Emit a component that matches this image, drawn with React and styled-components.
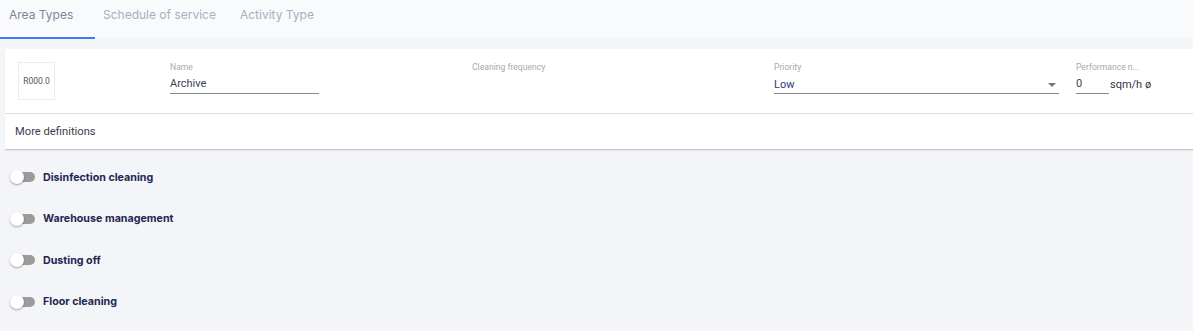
import styled, { createGlobalStyle } from 'styled-components'

const GlobalStyle = createGlobalStyle`
  html, body {
    margin: 0;
    padding: 0;
    background: #f4f5f8;
    font-family: Inter, "Noto Sans", sans-serif;
  }
`

const tabs = ['Area Types', 'Schedule of service', 'Activity Type']
const services = ['Disinfection cleaning', 'Warehouse management', 'Dusting off', 'Floor cleaning']

const App = () => {
  return (
    <Page>
      <GlobalStyle />
      <TabBar>
        {tabs.map((t, i) => (
          <Tab key={t} active={i === 0}>{t}</Tab>
        ))}
      </TabBar>
      <Card>
        <FieldsRow>
          <CodeBox>R000.0</CodeBox>
          <Field>
            <Label>Name</Label>
            <Input width="149px">Archive</Input>
          </Field>
          <Field>
            <Label>Cleaning frequency</Label>
          </Field>
          <Field>
            <Label>Priority</Label>
            <Select>
              <span>Low</span>
              <Caret />
            </Select>
          </Field>
          <Field>
            <Label>Performance n...</Label>
            <PerfRow>
              <Input width="33px">0</Input>
              <Unit>sqm/h ø</Unit>
            </PerfRow>
          </Field>
        </FieldsRow>
        <MoreRow>More definitions</MoreRow>
      </Card>
      <ToggleList>
        {services.map(s => (
          <ToggleRow key={s}>
            <Switch>
              <Thumb />
            </Switch>
            <ToggleLabel>{s}</ToggleLabel>
          </ToggleRow>
        ))}
      </ToggleList>
    </Page>
  )
}

const Page = styled.div`
  width: 1193px;
  height: 331px;
  overflow: hidden;
`
const TabBar = styled.div`
  display: flex;
  height: 39px;
  background: #f9fafc;
`
const Tab = styled.div`
  box-sizing: border-box;
  min-width: 95px;
  height: 39px;
  padding: 0 16px 0 8px;
  line-height: 29px;
  font-size: 12px;
  color: ${({active}) => (active ? '#7d8699' : '#a7afbf')};
  border-bottom: 2px solid ${({active}) => (active ? '#3b7cf6' : 'transparent')};
  &:first-child { padding-left: 9px; }
`
const Card = styled.div`
  margin: 10px 0 0 5px;
  background: #fff;
  border-bottom: 1px solid #c9c9c9;
  box-shadow: 0 1px 1px rgba(0,0,0,0.06);
`
const FieldsRow = styled.div`
  display: grid;
  grid-template-columns: 152px 302px 302px 302px 1fr;
  padding: 13px 0 0 13px;
  height: 51px;
  border-bottom: 1px solid #dedede;
  font-family: Roboto, "Liberation Sans", sans-serif;
`
const CodeBox = styled.div`
  width: 35px;
  height: 36px;
  border: 1px solid #ececf0;
  display: flex;
  align-items: center;
  justify-content: center;
  font-size: 8.5px;
  color: #555;
`
const Field = styled.div`
  display: flex;
  flex-direction: column;
`
const Label = styled.div`
  font-size: 8.6px;
  color: #a9a9a9;
  height: 13px;
  line-height: 10px;
`
const Input = styled.div`
  width: ${({width}) => width};
  height: 18px;
  border-bottom: 1px solid #8a8a8a;
  font-size: 11px;
  line-height: 18px;
  color: #3a3f5c;
`
const Select = styled.div`
  width: 285px;
  height: 18px;
  display: flex;
  justify-content: space-between;
  align-items: center;
  border-bottom: 1px solid #8a8a8a;
  font-size: 11px;
  color: #2f3a7a;
`
const Caret = styled.span`
  width: 0;
  height: 0;
  border-left: 4px solid transparent;
  border-right: 4px solid transparent;
  border-top: 4px solid #777;
  margin-right: 3px;
  margin-top: 2px;
`
const PerfRow = styled.div`
  display: flex;
  align-items: flex-start;
`
const Unit = styled.span`
  font-size: 11px;
  color: #333645;
  margin-left: 1px;
  line-height: 18px;
  margin-top: 1px;
`
const MoreRow = styled.div`
  height: 35px;
  padding-left: 10px;
  display: flex;
  align-items: center;
  font-family: Roboto, "Liberation Sans", sans-serif;
  font-size: 11.2px;
  color: #3c3c4a;
`
const ToggleList = styled.div`
  display: flex;
  flex-direction: column;
  padding: 19px 0 0 11px;
  gap: 25.6px;
`
const ToggleRow = styled.div`
  display: flex;
  align-items: center;
  height: 16px;
`
const Switch = styled.div`
  position: relative;
  width: 24px;
  height: 10px;
  border-radius: 5px;
  background: #9b9b9b;
  margin-right: 8px;
`
const Thumb = styled.span`
  position: absolute;
  left: -1px;
  top: -2px;
  width: 14px;
  height: 14px;
  border-radius: 50%;
  background: #fff;
  box-shadow: 0 1px 2px rgba(0,0,0,0.35);
`
const ToggleLabel = styled.span`
  font-size: 10.7px;
  font-weight: 700;
  color: #1f2750;
`

export default App
